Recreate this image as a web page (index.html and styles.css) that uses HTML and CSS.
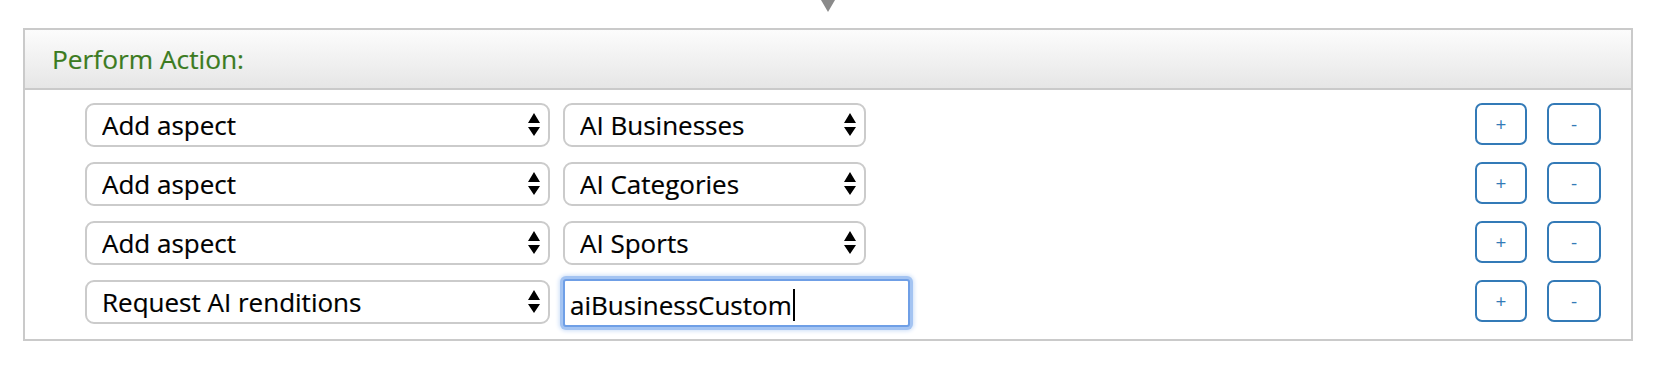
FILE: index.html
```html
<!DOCTYPE html>
<html lang="en">
<head>
<meta charset="utf-8">
<title>Perform Action</title>
<link rel="stylesheet" href="styles.css">
</head>
<body>
<div class="connector"><span class="pointer"></span></div>
<section class="panel">
  <header class="panel-head">Perform Action:</header>
  <div class="panel-body">
    <div class="row">
      <div class="sel sel-action"><select><option>Add aspect</option></select><svg class="arrows" viewBox="0 0 12 24"><path d="M6 0 L12 10 L0 10 Z M0 14 L12 14 L6 23 Z"/></svg></div>
      <div class="sel sel-value"><select><option>AI Businesses</option></select><svg class="arrows" viewBox="0 0 12 24"><path d="M6 0 L12 10 L0 10 Z M0 14 L12 14 L6 23 Z"/></svg></div>
      <div class="actions"><button class="btn">+</button><button class="btn btn-minus">-</button></div>
    </div>
    <div class="row">
      <div class="sel sel-action"><select><option>Add aspect</option></select><svg class="arrows" viewBox="0 0 12 24"><path d="M6 0 L12 10 L0 10 Z M0 14 L12 14 L6 23 Z"/></svg></div>
      <div class="sel sel-value"><select><option>AI Categories</option></select><svg class="arrows" viewBox="0 0 12 24"><path d="M6 0 L12 10 L0 10 Z M0 14 L12 14 L6 23 Z"/></svg></div>
      <div class="actions"><button class="btn">+</button><button class="btn btn-minus">-</button></div>
    </div>
    <div class="row">
      <div class="sel sel-action"><select><option>Add aspect</option></select><svg class="arrows" viewBox="0 0 12 24"><path d="M6 0 L12 10 L0 10 Z M0 14 L12 14 L6 23 Z"/></svg></div>
      <div class="sel sel-value"><select><option>AI Sports</option></select><svg class="arrows" viewBox="0 0 12 24"><path d="M6 0 L12 10 L0 10 Z M0 14 L12 14 L6 23 Z"/></svg></div>
      <div class="actions"><button class="btn">+</button><button class="btn btn-minus">-</button></div>
    </div>
    <div class="row">
      <div class="sel sel-action"><select><option>Request AI renditions</option></select><svg class="arrows" viewBox="0 0 12 24"><path d="M6 0 L12 10 L0 10 Z M0 14 L12 14 L6 23 Z"/></svg></div>
      <div class="text-input" role="textbox"><span>aiBusinessCustom</span><span class="caret"></span></div>
      <div class="actions"><button class="btn">+</button><button class="btn btn-minus">-</button></div>
    </div>
  </div>
</section>
</body>
</html>
```
FILE: styles.css
```css
html, body {
  margin: 0;
  padding: 0;
  background: #ffffff;
  font-family: "Open Sans", "DejaVu Sans", sans-serif;
}

.connector {
  height: 28px;
  display: flex;
  justify-content: center;
  align-items: flex-start;
}

.pointer {
  width: 0;
  height: 0;
  border-left: 7px solid transparent;
  border-right: 7px solid transparent;
  border-top: 12px solid #8a8a8a;
  filter: blur(0.4px);
}

.panel {
  margin: 0 22px 0 23px;
  border: 2px solid #cacaca;
  background: #ffffff;
}

.panel-head {
  height: 58px;
  display: flex;
  align-items: center;
  padding-left: 27px;
  font-size: 26.3px;
  color: #3c7b1f;
  background: linear-gradient(to bottom, #fcfcfc 0%, #efefef 60%, #e6e6e6 100%);
  border-bottom: 2px solid #cacaca;
  -webkit-text-stroke: 0.2px #3c7b1f;
}

.panel-body {
  padding: 13px 30px 15px 60px;
  display: flex;
  flex-direction: column;
  gap: 15px;
}

.row {
  display: flex;
  align-items: flex-start;
}

.sel {
  position: relative;
  height: 44px;
  box-sizing: border-box;
}

.sel select {
  appearance: none;
  -webkit-appearance: none;
  width: 100%;
  height: 44px;
  box-sizing: border-box;
  border: 2px solid #cbcbcb;
  border-radius: 9px;
  background: #ffffff;
  padding: 0 40px 0 15px;
  font-family: "Open Sans", "DejaVu Sans", sans-serif;
  font-size: 26px;
  color: #000000;
  outline: none;
  -webkit-text-stroke: 0.2px #000000;
}

.sel .arrows {
  position: absolute;
  top: 10px;
  right: 10px;
  width: 12px;
  height: 24px;
  fill: #000000;
  pointer-events: none;
}

.sel-action {
  width: 465px;
}

.sel-value {
  width: 303px;
  margin-left: 13px;
}

.text-input {
  width: 347px;
  height: 48px;
  margin: -1px 0 -3px 13px;
  box-sizing: border-box;
  border: 2px solid #6f9fe6;
  border-radius: 3px;
  box-shadow: 0 0 0 3px #a4c4f2, 0 0 4px 4px #cddff8;
  display: flex;
  align-items: center;
  padding: 3px 0 0 5px;
  font-size: 26px;
  color: #000000;
  background: #ffffff;
  -webkit-text-stroke: 0.2px #000000;
}

.caret {
  display: inline-block;
  width: 2px;
  height: 32px;
  background: #000000;
  margin-left: 1px;
}

.actions {
  margin-left: auto;
  display: flex;
  gap: 20px;
}

.btn {
  width: 52px;
  height: 42px;
  box-sizing: border-box;
  border: 2px solid #337ab7;
  border-radius: 7px;
  background: #ffffff;
  color: #337ab7;
  font-family: "Open Sans", "DejaVu Sans", sans-serif;
  font-size: 19px;
  padding: 0;
  line-height: 1;
}

.btn-minus {
  width: 54px;
}
```
